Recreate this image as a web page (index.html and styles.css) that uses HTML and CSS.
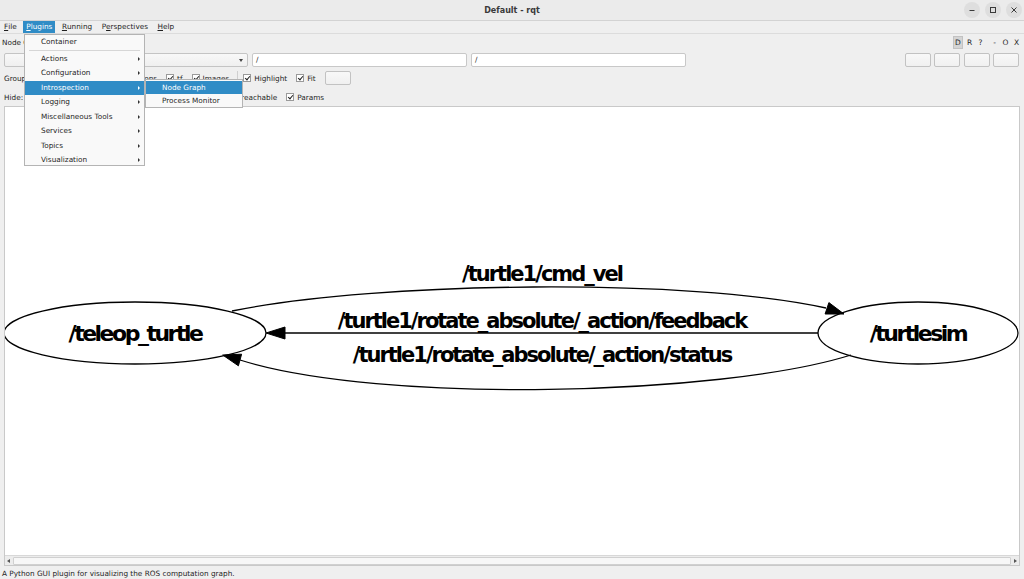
FILE: index.html
```html
<!DOCTYPE html>
<html>
<head>
<meta charset="utf-8">
<title>Default - rqt</title>
<link rel="stylesheet" href="styles.css">
</head>
<body>
<div class="window">
  <div class="titlebar">
    <div class="title">Default - rqt</div>
    <div class="wbtns">
      <span class="wbtn"><svg width="8" height="8" viewBox="0 0 8 8"><path d="M1.5 4.5h5" stroke="#3a3a3a" stroke-width="1"/></svg></span>
      <span class="wbtn"><svg width="8" height="8" viewBox="0 0 8 8"><rect x="1.5" y="1.5" width="5" height="5" fill="none" stroke="#3a3a3a" stroke-width="1"/></svg></span>
      <span class="wbtn"><svg width="8" height="8" viewBox="0 0 8 8"><path d="M1.5 1.5l5 5M6.5 1.5l-5 5" stroke="#3a3a3a" stroke-width="1"/></svg></span>
    </div>
  </div>
  <div class="menubar">
    <span class="mitem"><u>F</u>ile</span>
    <span class="mitem active"><u>P</u>lugins</span>
    <span class="mitem"><u>R</u>unning</span>
    <span class="mitem">P<u>e</u>rspectives</span>
    <span class="mitem"><u>H</u>elp</span>
  </div>
  <div class="dock">
    <div class="docktitle">
      <span class="dtext">Node Graph</span>
      <div class="dbtns"><span class="dbtn on">D</span><span class="dbtn">R</span><span class="dbtn">?</span><span class="dbtn gap">-</span><span class="dbtn">O</span><span class="dbtn">X</span></div>
    </div>
    <div class="row row2">
      <div class="combo"><span></span><span class="carrow"></span></div>
      <div class="input">/</div>
      <div class="input">/</div>
      <div class="spacer"></div>
      <div class="btns"><span class="btn"></span><span class="btn"></span><span class="btn"></span><span class="btn"></span></div>
    </div>
    <div class="row row3">
      <span class="lbl">Group:</span>
      <span class="chk g1"><span class="box on"></span>Namespaces</span>
      <span class="chk"><span class="box on"></span>Actions</span>
      <span class="chk"><span class="box on"></span>tf</span>
      <span class="chk"><span class="box on"></span>Images</span>
      <span class="vsep"></span>
      <span class="chk"><span class="box on"></span>Highlight</span>
      <span class="chk"><span class="box on"></span>Fit</span>
      <span class="btn small"></span>
    </div>
    <div class="row row4">
      <span class="lbl">Hide:</span>
      <span class="chk h1"><span class="box on"></span>Dead sinks</span>
      <span class="chk"><span class="box on"></span>Leaf topics</span>
      <span class="chk"><span class="box on"></span>Debug</span>
      <span class="chk"><span class="box on"></span>tf</span>
      <span class="chk"><span class="box on"></span>Unreachable</span>
      <span class="chk"><span class="box on"></span>Params</span>
    </div>
    <div class="canvas">
      <svg class="graph" width="1014" height="448" viewBox="5 107 1014 448">
        <g fill="none" stroke="#000" stroke-width="1.3">
          <ellipse cx="135" cy="333" rx="131" ry="31"/>
          <ellipse cx="918" cy="333" rx="100" ry="31"/>
          <path d="M232 311 C380 281 690 278 826 308"/>
          <path d="M818 333 L284 333"/>
          <path d="M851 355 C720 396 380 404 240 360"/>
        </g>
        <g fill="#000" stroke="#000" stroke-width="1">
          <polygon points="844,314 828.9,302.6 825.1,314"/>
          <polygon points="266,333 285,327 285,339"/>
          <polygon points="222.7,355 241.6,354.2 238.4,365.8"/>
        </g>
        <g class="lab" text-anchor="middle">
          <text x="542" y="281">/turtle1/cmd_vel</text>
          <text x="542" y="328">/turtle1/rotate_absolute/_action/feedback</text>
          <text x="542" y="362">/turtle1/rotate_absolute/_action/status</text>
          <text class="node" x="135" y="341">/teleop_turtle</text>
          <text class="node" x="918" y="341">/turtlesim</text>
        </g>
      </svg>
      <div class="hscroll">
        <span class="sarrow left"></span>
        <span class="handle"></span>
        <span class="sarrow right"></span>
      </div>
    </div>
  </div>
  <div class="status">A Python GUI plugin for visualizing the ROS computation graph.</div>

  <div class="menu">
    <div class="mi">Container</div>
    <div class="msep"></div>
    <div class="mi sub">Actions</div>
    <div class="mi sub">Configuration</div>
    <div class="mi sub hl">Introspection</div>
    <div class="mi sub">Logging</div>
    <div class="mi sub">Miscellaneous Tools</div>
    <div class="mi sub">Services</div>
    <div class="mi sub">Topics</div>
    <div class="mi sub">Visualization</div>
  </div>
  <div class="menu submenu">
    <div class="mi hl">Node Graph</div>
    <div class="mi">Process Monitor</div>
  </div>
</div>
</body>
</html>
```
FILE: styles.css
```css
* { box-sizing: border-box; }
html, body { margin: 0; padding: 0; }
body {
  width: 1024px; height: 579px; overflow: hidden;
  background: #efefef;
  font-family: "DejaVu Sans", sans-serif;
  font-size: 7.3px;
  color: #1f1f1f;
}
.window { position: relative; width: 1024px; height: 579px; }

.titlebar {
  height: 21px; background: #ebebeb; border-bottom: 1px solid #d3d3d3;
  display: flex; align-items: center; justify-content: center; position: relative;
}
.title { font-weight: bold; font-size: 8px; color: #3a3a3a; }
.wbtns { position: absolute; right: 2px; top: 2px; display: flex; gap: 5px; }
.wbtn {
  width: 16px; height: 16px; border-radius: 50%; background: #dedede;
  display: flex; align-items: center; justify-content: center;
}

.menubar {
  height: 13px; display: flex; align-items: stretch; padding-left: 1px;
  border-bottom: 1px solid #dcdcdc; margin-top: 0;
}
.mitem { padding: 0 3px; margin-right: 3.5px; display: flex; align-items: center; line-height: 12px; }
.mitem u { text-decoration-thickness: 0.6px; text-underline-offset: 1px; }
.mitem.active { background: #308cc6; color: #fff; }

.dock { padding: 0 4px 0 4px; }
.docktitle { height: 16px; display: flex; align-items: center; justify-content: space-between; padding-left: 0; margin-left: -2px; }
.dbtns { display: flex; align-items: center; margin-right: -2px; }
.dbtn { width: 11px; text-align: center; font-size: 7.5px; color: #2a2a2a; line-height: 11px; }
.dbtn.on { background: #d4d4d4; border: 1px solid #c2c2c2; width: 10px; margin-right: 1px; }
.dbtn.gap { margin-left: 3px; }

.row { display: flex; align-items: center; }
.row2 { height: 14px; margin-top: 3px; gap: 4px; }
.combo {
  width: 244px; height: 14px; border: 1px solid #c4c4c4; border-radius: 2px;
  background: linear-gradient(#f8f8f8, #efefef);
  display: flex; align-items: center; justify-content: space-between; padding: 0 4px 0 4px; color: #1f1f1f;
}
.carrow { width: 0; height: 0; border-left: 2.5px solid transparent; border-right: 2.5px solid transparent; border-top: 3px solid #444; }
.input {
  width: 215px; height: 14px; background: #fff; border: 1px solid #c8c8c8; border-radius: 2px;
  padding-left: 3px; line-height: 12px;
}
.spacer { flex: 1; }
.btns { display: flex; gap: 3.5px; margin-right: 1px; }
.btn {
  display: inline-block; width: 26px; height: 14px; background: linear-gradient(#f8f8f8, #f0f0f0);
  border: 1px solid #c2c2c2; border-radius: 2px;
}
.btn.small { width: 26px; margin-left: 0; }

.row3 { height: 14px; margin-top: 4px; }
.row4 { height: 14px; margin-top: 5px; }
.lbl { margin-right: 6px; }
.chk { display: flex; align-items: center; margin-right: 9px; }
.chk.g1 { margin-left: 18px; }
.chk.h1 { margin-left: 2px; }
.box {
  width: 8px; height: 8px; border: 1px solid #9a9a9a; background: #fff; margin-right: 3px; position: relative;
}
.box.on::after {
  content: ""; position: absolute; left: 2px; top: 0px; width: 2px; height: 4px;
  border-right: 1.2px solid #222; border-bottom: 1.2px solid #222; transform: rotate(40deg);
}
.vsep { width: 1px; height: 14px; background: #cfcfcf; margin: 0 5px 0 -1px; }

.canvas {
  margin-top: 2px; width: 1016px; height: 460px; border: 1px solid #c9c9c9; background: #fff;
  display: flex; flex-direction: column;
}
.graph { display: block; }
.lab text { font-family: "DejaVu Sans", sans-serif; font-weight: bold; font-size: 21px; letter-spacing: -2px; fill: #000; }
.lab text.node { font-size: 22px; letter-spacing: -2.5px; }
.hscroll {
  height: 10px; background: #ececec; border-top: 1px solid #d8d8d8; display: flex; align-items: center; padding: 0 2px;
}
.handle { flex: 1; height: 8px; background: #f7f7f7; border: 1px solid #d0d0d0; border-radius: 1px; margin: 0 3px; }
.sarrow { width: 0; height: 0; border-top: 2.5px solid transparent; border-bottom: 2.5px solid transparent; }
.sarrow.left { border-right: 3px solid #555; }
.sarrow.right { border-left: 3px solid #555; }

.status { padding: 3px 0 0 2px; white-space: nowrap; }

.menu {
  position: absolute; left: 24px; top: 34px; width: 121px; height: 132px;
  background: #f9f9f9; border: 1px solid #b4b4b4; padding-top: 0;
}
.mi { height: 14.5px; line-height: 14.5px; padding-left: 16px; position: relative; white-space: nowrap; }
.mi.sub::after {
  content: ""; position: absolute; right: 4px; top: 5px; width: 0; height: 0;
  border-top: 2.5px solid transparent; border-bottom: 2.5px solid transparent; border-left: 2.5px solid #333;
}
.mi.hl { background: #308cc6; color: #fff; }
.mi.hl.sub::after { border-left-color: #fff; }
.msep { height: 1px; background: #d6d6d6; margin: 0.5px 4px 0.5px 4px; }
.submenu { left: 145px; top: 79px; width: 98px; height: 29px; }
.submenu .mi { padding-left: 16px; height: 13.5px; line-height: 13.5px; }
.submenu .mi.hl { margin-top: 0.5px; }
```
